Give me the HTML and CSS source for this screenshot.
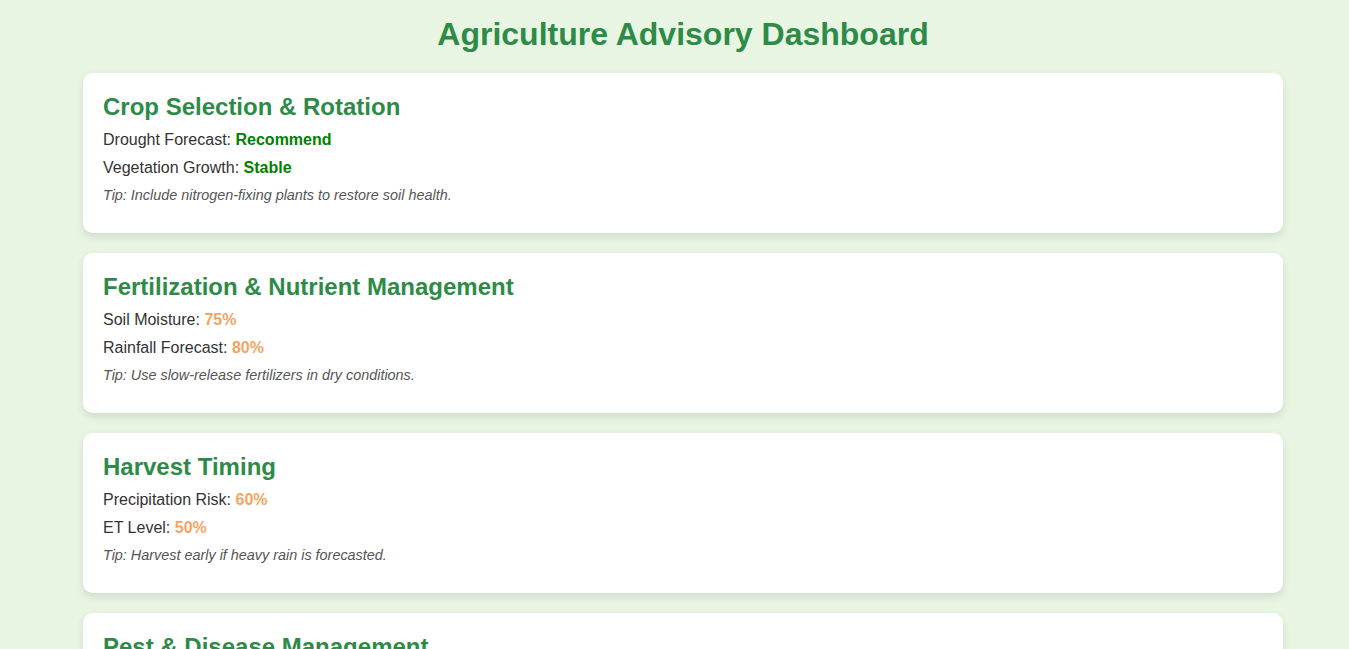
FILE: index.html
```html
<!DOCTYPE html>
<html lang="en">
<head>
<meta charset="utf-8">
<title>Agriculture Advisory Dashboard</title>
<link rel="stylesheet" href="styles.css">
</head>
<body>
<div class="page">
  <h1 class="title">Agriculture Advisory Dashboard</h1>
  <div class="cards">
    <section class="card">
      <h2 class="card-title">Crop Selection &amp; Rotation</h2>
      <p class="row">Drought Forecast: <span class="val good">Recommend</span></p>
      <p class="row">Vegetation Growth: <span class="val good">Stable</span></p>
      <p class="tip">Tip: Include nitrogen-fixing plants to restore soil health.</p>
    </section>
    <section class="card">
      <h2 class="card-title">Fertilization &amp; Nutrient Management</h2>
      <p class="row">Soil Moisture: <span class="val warn">75%</span></p>
      <p class="row">Rainfall Forecast: <span class="val warn">80%</span></p>
      <p class="tip">Tip: Use slow-release fertilizers in dry conditions.</p>
    </section>
    <section class="card">
      <h2 class="card-title">Harvest Timing</h2>
      <p class="row">Precipitation Risk: <span class="val warn">60%</span></p>
      <p class="row">ET Level: <span class="val warn">50%</span></p>
      <p class="tip">Tip: Harvest early if heavy rain is forecasted.</p>
    </section>
    <section class="card">
      <h2 class="card-title">Pest &amp; Disease Management</h2>
      <p class="row">Humidity: <span class="val warn">70%</span></p>
      <p class="row">Temperature: <span class="val warn">28°C</span></p>
      <p class="tip">Tip: Monitor crops closely for early signs of infestation.</p>
    </section>
  </div>
</div>
</body>
</html>
```

FILE: styles.css
```css
html, body {
  margin: 0;
  padding: 0;
}
body {
  background: #e8f5e3;
  font-family: "Liberation Sans", Arial, sans-serif;
  color: #333;
}
.page {
  padding: 0 0 20px 17px;
}
.title {
  margin: 0;
  padding: 16px 0 20px;
  text-align: center;
  font-size: 32px;
  line-height: 37px;
  font-weight: bold;
  color: #2e8b47;
}
.cards {
  max-width: 1200px;
  margin: 0 auto;
  display: flex;
  flex-direction: column;
  gap: 20px;
}
.card {
  background: #fff;
  border-radius: 10px;
  padding: 20px;
  box-shadow: 0 4px 8px rgba(0, 0, 0, 0.1);
}
.card-title {
  margin: 0 0 10px;
  font-size: 24px;
  line-height: 28px;
  font-weight: bold;
  color: #2e8b47;
}
.row {
  margin: 10px 0;
  font-size: 16px;
  line-height: 18px;
}
.val {
  font-weight: bold;
}
.good {
  color: #008000;
}
.warn {
  color: #f4a460;
}
.tip {
  margin: 10px 0;
  font-size: 14.4px;
  line-height: 16px;
  font-style: italic;
  color: #555;
}
```
